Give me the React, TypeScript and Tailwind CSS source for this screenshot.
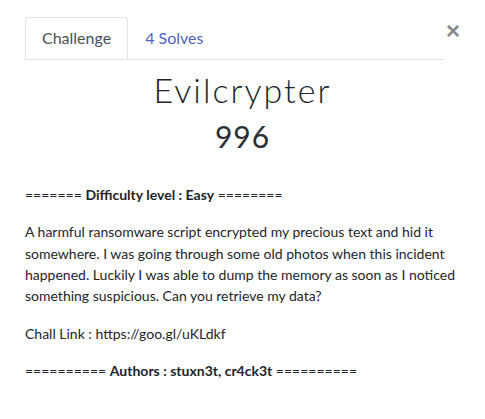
import React from "react";

function App() {
  return (
    <div className="w-[485px] h-[419px] bg-white text-[#212529] font-['Lato','Open_Sans',sans-serif]">
      <div className="pt-[17px] px-[25px]">
        <div className="flex items-start">
          <nav className="flex flex-1 border-b border-[#dee2e6] mr-[2px]">
            <a className="-mb-px h-[42px] px-[16px] flex items-center border border-[#dee2e6] border-b-white rounded-t-[4px] text-[16px] text-[#495057] bg-white">
              Challenge
            </a>
            <a className="h-[42px] px-[17px] flex items-center text-[16px] text-[#4f62c8]">
              4 Solves
            </a>
          </nav>
          <button className="mt-[2px] text-[#8a8a8a] text-[24px] leading-none font-bold font-['Liberation_Sans',sans-serif]">
            ×
          </button>
        </div>
        <div className="text-center pt-[10px]">
          <h2 className="font-['Lato',sans-serif] font-light text-[34px] leading-[1.15] tracking-[2px] text-[#212529]">
            Evilcrypter
          </h2>
          <h3 className="font-['Lato',sans-serif] font-normal text-[30px] leading-[1.2] tracking-[1px] text-[#2b2f33] mt-[9px]">
            996
          </h3>
        </div>
        <div className="mt-[30px] text-[14px] leading-[21.3px]">
          <p className="mb-[16px]">
            ======= <strong>Difficulty level : Easy</strong> ========
          </p>
          <p className="mb-[16px]">
            A harmful ransomware script encrypted my precious text and hid it
            somewhere. I was going through some old photos when this incident
            happened. Luckily I was able to dump the memory as soon as I noticed
            something suspicious. Can you retrieve my data?
          </p>
          <p className="mb-[16px]">Chall Link : https://goo.gl/uKLdkf</p>
          <p>
            ========== <strong>Authors : stuxn3t, cr4ck3t</strong> ==========
          </p>
        </div>
      </div>
    </div>
  );
}

export default App;
